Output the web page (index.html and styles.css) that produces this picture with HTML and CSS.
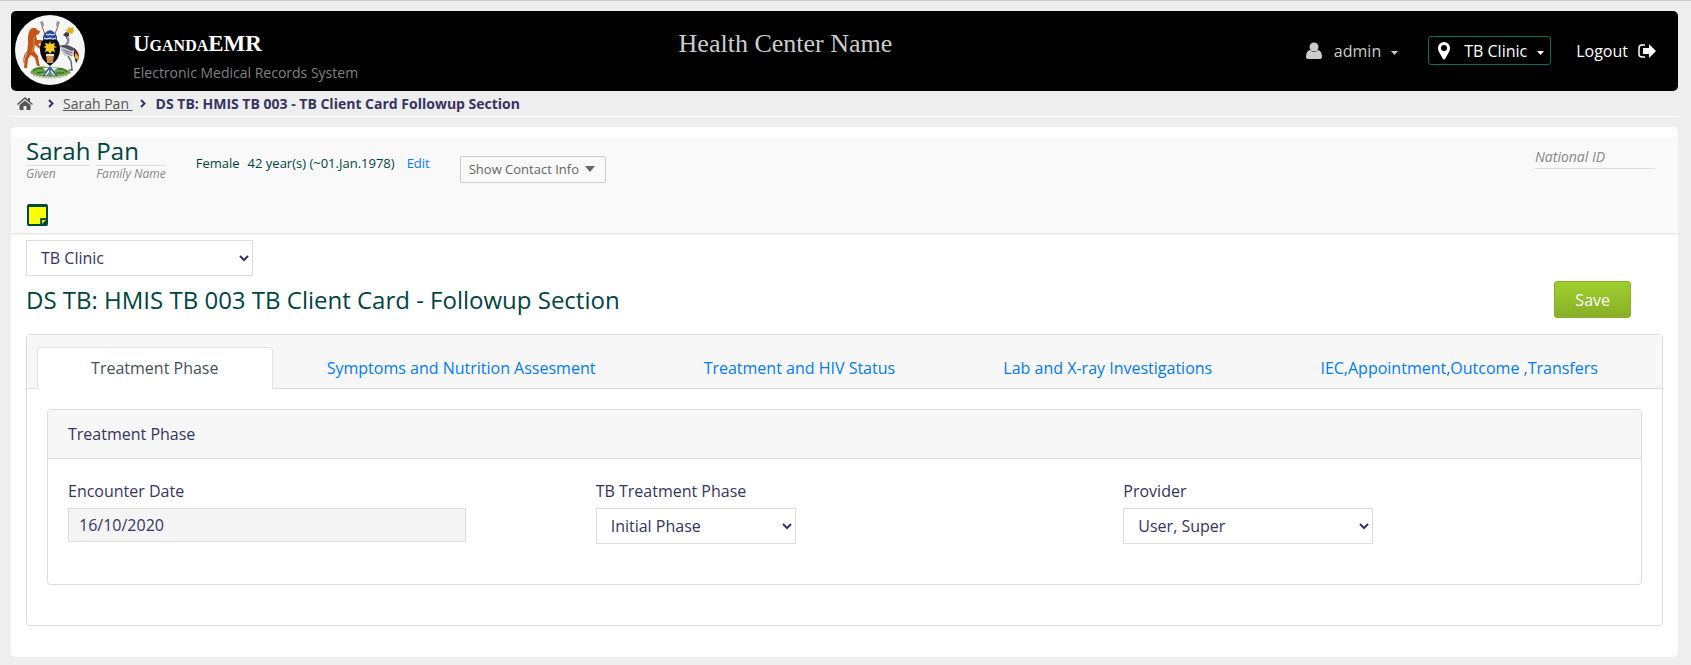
FILE: index.html
```html
<!DOCTYPE html>
<html lang="en">
<head>
<meta charset="utf-8">
<title>UgandaEMR</title>
<link rel="stylesheet" href="styles.css">
</head>
<body>
<header class="topbar">
  <a class="logo" href="#" aria-label="Home">
    <svg viewBox="0 0 70 70" width="70" height="70" aria-hidden="true">
      <circle cx="35" cy="35" r="35" fill="#f6f6f6"/>
      <path d="M15 58q2-5 8-6q5-2 12 1q8-2 14 1q6 1 7 4q-8 4-21 4t-20-4z" fill="#6fa544"/>
      <path d="M18 56q5-4 10-2M43 54q6-1 9 3M22 58l8-1M41 58l8 0" stroke="#3f6f2c" stroke-width="1.500" fill="none"/>
      <path d="M18 60q17 6 35 0" stroke="#b9b09a" stroke-width="1.500" stroke-dasharray="2 1" fill="none"/>
      <path d="M27 11l7 20M43 11l-8 20" stroke="#a8542d" stroke-width="1"/>
      <path d="M25 7l3-1l1 5l-2 1zM45 7l-3-1l-1 5l2 1z" fill="#8e9498"/>
      <path d="M15 15l2-2l4 0l1 2l3 1l-1 3l-3 1l1 5l5 0l0 3l-4 1l3 3l-1 2l-5-4l-1 6l4 5l1 7l1 3l-3 0l-2-8l-4-3l-3 4l-1 9l-3 0l1-10l2-5l1-9l0-8l1-4z" fill="#c4561c"/>
      <path d="M19 22l0 9l-2 6" stroke="#e98c4c" stroke-width="1" fill="none"/>
      <path d="M14 36q-6 2-5 12" stroke="#a54816" stroke-width="1" fill="none"/>
      <path d="M50 14l3 1l0-3l3 1l2-1l1 4l-2 3l-4-1z" fill="#dfb51c"/>
      <path d="M48 20l3-3l3 1l0 3l-3 1z" fill="#3b3b42"/>
      <path d="M51 21h2v3h-2z" fill="#cf2929"/>
      <path d="M52 22q3 4-1 8q-3 4 0 6" stroke="#8490a3" stroke-width="2.500" fill="none"/>
      <path d="M45 31q6-2 10 0l6 4l0 8l-5-3l-6 1l-4-5z" fill="#c3c7cd"/>
      <path d="M44 31q9-3 16 3l-3 2q-6-3-13-5z" fill="#4b525d"/>
      <path d="M50 37l7 4M48 35l9 3" stroke="#6c737d" stroke-width="1"/>
      <path d="M59 33q5 4 5 10l-3 5l-2-8z" fill="#2d1717"/>
      <path d="M59 34l5 7l-3 1z" fill="#b72623"/><path d="M60 38l4 4l-1 3l-3-2z" fill="#e8b82a"/>
      <path d="M53 41l3 5l1 9M54 55h4" stroke="#6a7077" stroke-width="1.500" fill="none"/>
      <path d="M28 25h14q3 3 3 10q0 9-10 16q-10-7-10-16q0-7 3-10z" fill="#080808"/>
      <path d="M35 26l1 3l4-1l-1 3l3 1l-3 1l1 4l-3-1l-2 3l-2-3l-3 1l1-4l-3-1l3-1l-1-3l4 1z" fill="#f3cc22"/>
      <path d="M31 39h8l-1 9h-6z" fill="#c98c4c"/><path d="M31 39h8v2h-8z" fill="#f0e4cb"/>
      <path d="M28 25l0-3q1-5 7-7q6 2 7 7l0 3z" fill="#274c9b"/>
      <path d="M31 19l2 1l2-1l2 1l3-1M29 23l3 1l3-1l3 1l3-1" stroke="#fff" stroke-width="1" fill="none"/>
      <path d="M28 53h14l-3 3l3 4h-3l-3-3v5h-2v-5l-3 3h-4l4-4z" fill="#fff"/>
      <path d="M35 52l-7 9M35 52l7 9M35 54v8" stroke="#2b5399" stroke-width="1.500"/>
    </svg>
  </a>
  <div class="brand">
    <h1 class="brand-name">UgandaEMR</h1>
    <div class="brand-sub">Electronic Medical Records System</div>
  </div>
  <div class="facility">Health Center Name</div>
  <nav class="user-nav" aria-label="User">
    <button class="nav-item user" type="button">
      <svg width="16" height="18" viewBox="0 0 16 18" fill="currentColor" aria-hidden="true"><circle cx="8" cy="5" r="4.500"/><path d="M4 8Q0 9 0 15q0 2 2 2h12q2 0 2-2 0-6-4-7-2 2-4 2T4 8z"/></svg>
      <span>admin</span>
      <svg class="small-caret" width="7" height="4" viewBox="0 0 7 4" fill="currentColor" aria-hidden="true"><path d="M0 0h7L3.500 4z"/></svg>
    </button>
    <button class="nav-item location" type="button">
      <svg width="12" height="18" viewBox="0 0 12 18" fill="currentColor" fill-rule="evenodd" aria-hidden="true"><path d="M6 0a6 6 0 0 1 6 6q0 2-1 4L7 17q-1 1-2 0L1 10Q0 8 0 6a6 6 0 0 1 6-6zm0 3a3 3 0 1 0 0 6 3 3 0 0 0 0-6z"/></svg>
      <span>TB Clinic</span>
      <svg class="small-caret" width="7" height="4" viewBox="0 0 7 4" fill="currentColor" aria-hidden="true"><path d="M0 0h7L3.500 4z"/></svg>
    </button>
    <a class="nav-item logout" href="#">
      <span>Logout</span>
      <svg width="18" height="14" viewBox="0 0 18 14" aria-hidden="true"><path d="M7 1H4Q1 1 1 4v6q0 3 3 3h3" fill="none" stroke="currentColor" stroke-width="1.500"/><path d="M5 4h6V0l7 7-7 7v-4H5z" fill="currentColor"/></svg>
    </a>
  </nav>
</header>

<nav class="breadcrumbs" aria-label="Breadcrumb">
  <a class="home" href="#" aria-label="Home"><svg width="16" height="13" viewBox="0 0 16 13" fill="currentColor" aria-hidden="true"><path d="M8 0l3 2.500V1h2v3.500L16 7l-1 1-7-6-7 6-1-1z"/><path d="M8 3.500l5.500 4.500v5h-4V9h-3v4h-4V8z"/></svg></a>
  <svg class="chevron" width="6" height="9" viewBox="0 0 6 9" aria-hidden="true"><path d="M1 1l3.500 3.500L1 8" fill="none" stroke="currentColor" stroke-width="2"/></svg>
  <a class="crumb" href="#">Sarah Pan&nbsp;</a>
  <svg class="chevron" width="6" height="9" viewBox="0 0 6 9" aria-hidden="true"><path d="M1 1l3.500 3.500L1 8" fill="none" stroke="currentColor" stroke-width="2"/></svg>
  <strong>DS TB: HMIS TB 003 - TB Client Card Followup Section</strong>
</nav>

<main class="content">
  <section class="patient">
    <div class="patient-row">
      <div class="names">
        <div class="name"><span class="name-value">Sarah</span><em class="name-label">Given</em></div>
        <div class="name"><span class="name-value">Pan</span><em class="name-label">Family Name</em></div>
      </div>
      <div class="demographics"><span>Female</span><span>42 year(s) (~01.Jan.1978)</span><a class="edit" href="#">Edit</a></div>
      <button class="contact" type="button">Show Contact Info
        <svg width="10" height="6" viewBox="0 0 10 6" fill="currentColor" aria-hidden="true"><path d="M0 0h10L5 6z"/></svg>
      </button>
      <div class="identifier"><em>National ID</em></div>
    </div>
    <button class="note" type="button" aria-label="Sticky note">
      <svg width="21" height="22" viewBox="0 0 21 22" aria-hidden="true"><rect width="21" height="22" rx="2" fill="#00463f"/><path d="M2 3h17v11h-6v6H2z" fill="#ff0"/><path d="M15 16h4l-4 4z" fill="#dce812"/><path d="M13.500 20v-5.500H19" fill="none" stroke="#366b25"/></svg>
    </button>
  </section>

  <section class="form">
    <select class="select clinic" aria-label="Clinic"><option>TB Clinic</option></select>
    <div class="title-row">
      <h2 class="title">DS TB: HMIS TB 003 TB Client Card - Followup Section</h2>
      <button class="save" type="button">Save</button>
    </div>
    <div class="card">
      <nav class="tabs" aria-label="Sections">
        <a class="tab active" href="#" aria-current="page">Treatment Phase</a>
        <a class="tab" href="#">Symptoms and Nutrition Assesment</a>
        <a class="tab" href="#">Treatment and HIV Status</a>
        <a class="tab" href="#">Lab and X-ray Investigations</a>
        <a class="tab" href="#">IEC,Appointment,Outcome ,Transfers</a>
      </nav>
      <div class="card-body">
        <section class="panel">
          <h3 class="panel-title">Treatment Phase</h3>
          <div class="fields">
            <div class="field">
              <label for="encounter">Encounter Date</label>
              <input class="date" id="encounter" type="text" value="16/10/2020" readonly>
            </div>
            <div class="field">
              <label for="phase">TB Treatment Phase</label>
              <select class="select phase" id="phase"><option>Initial Phase</option></select>
            </div>
            <div class="field">
              <label for="provider">Provider</label>
              <select class="select provider" id="provider"><option>User, Super</option></select>
            </div>
          </div>
        </section>
      </div>
    </div>
  </section>
</main>
</body>
</html>
```
FILE: styles.css
```css
* { box-sizing: border-box; }

body {
  margin: 0;
  padding: 10px 13px 9px 11px;
  border-top: 1px solid #ccc;
  background: #eee;
  color: #363463;
  font: 16px/24px "Open Sans", sans-serif;
}

button, input, select { font: inherit; color: inherit; }
h1, h2, h3 { margin: 0; font-weight: 400; }
a { color: #007bff; text-decoration: none; }
svg { display: block; flex: none; }

.topbar {
  display: grid;
  grid-template-columns: 118px calc(40% - 118px) 1fr auto;
  height: 80px;
  padding: 4px;
  border-radius: 5px;
  background: #000;
  color: #ccc;
}
.logo { width: 70px; }
.brand { padding-top: 13px; }
.brand-name {
  color: #fff;
  font: bold 23px/32px "Liberation Serif", serif;
  font-variant: small-caps;
}
.brand-sub { color: #808080; font-size: 14px; line-height: 26px; }
.facility { padding-top: 13px; font: 26px/32px "Liberation Serif", serif; }
.user-nav {
  display: flex;
  justify-content: flex-end;
  align-items: flex-start;
  padding: 21px 18px 0 0;
}
.nav-item {
  display: flex;
  align-items: center;
  height: 29px;
  padding: 0;
  border: 0;
  background: none;
  color: #fff;
}
.user { gap: 12px; margin-right: 30px; color: #ccc; }
.small-caret { margin-top: 4px; }
.user .small-caret { margin-left: -2px; }
.location {
  gap: 10px;
  margin-right: 25px;
  padding: 0 6px 0 9px;
  border: 1px solid #007060;
  border-radius: 3px;
}
.location span { padding-left: 4px; }
.logout { gap: 10px; }

.breadcrumbs {
  display: flex;
  align-items: center;
  height: 26px;
  padding-left: 6px;
  border-bottom: 1px solid #fff;
  font-size: 14px;
}
.home, .crumb { color: #555; }
.crumb { margin-right: 7px; text-decoration: underline; }
.home { margin-right: 15px; }
.home + .chevron { margin-right: 9px; }
.crumb + .chevron { margin-right: 10px; }

.content {
  margin-top: 10px;
  padding: 10px 0 31px;
  border-radius: 5px;
  background: #fff;
}
.patient {
  height: 98px;
  padding: 0 15px;
  border-bottom: 2px solid #eee;
  background: #f9f9f9;
  color: #00463f;
}
.patient-row { display: flex; align-items: flex-start; height: 67px; }
.names { display: flex; gap: 6px; }
.name-value {
  display: block;
  height: 29px;
  border-bottom: 1px solid #ddd;
  font-size: 24px;
  line-height: 28px;
}
.name-label { display: block; color: #888; font-size: 12px; line-height: 16px; }
.demographics {
  display: flex;
  gap: 8px;
  margin-left: 30px;
  padding-top: 14px;
  font-size: 13px;
}
.edit { margin-left: 4px; }
.contact {
  display: flex;
  align-items: center;
  gap: 6px;
  height: 27px;
  margin: 19px 0 0 30px;
  padding: 0 10px 1px 8px;
  border: 1px solid #ccc;
  border-radius: 2px;
  background: none;
  color: #666;
  font-size: 13px;
}
.identifier {
  width: 120px;
  margin: 9px 8px 0 auto;
  border-bottom: 1px solid #ddd;
  color: #888;
  font-size: 14px;
  line-height: 22px;
}
.note { display: block; margin-left: 1px; padding: 0; border: 0; background: none; }

.form { padding: 5px 15px 0; }
.select {
  display: block;
  height: 36px;
  padding: 5px 10px;
  border: 1px solid #ddd;
  border-radius: 0;
  background: #fff;
}
.clinic { width: 227px; }
.title-row {
  display: flex;
  justify-content: space-between;
  align-items: center;
  padding: 5px 32px 16px 0;
}
.title { color: #00463f; font-size: 24px; line-height: 36px; }
.save {
  height: 37px;
  padding: 0 20px;
  border: 1px solid #88af28;
  border-radius: 3px;
  background: linear-gradient(#9fd02e, #88af28);
  color: #fff;
}
.card { border: 1px solid #ddd; border-radius: 4px; }
.tabs {
  display: flex;
  padding: 12px 10px 0;
  border-bottom: 1px solid #ddd;
  background: #f7f7f7;
}
.tab {
  flex: 1 1 auto;
  margin-bottom: -1px;
  padding: 8px 16px;
  border: 1px solid transparent;
  border-radius: 4px 4px 0 0;
  text-align: center;
}
.active { border-color: #dee2e6 #dee2e6 #fff; background: #fff; color: #495057; }
.card-body { padding: 20px 20px 40px; }
.panel { border: 1px solid #ddd; border-radius: 4px; }
.panel-title {
  padding: 12px 20px;
  border-bottom: 1px solid #ddd;
  background: #f7f7f7;
  font-size: 16px;
  line-height: 24px;
}
.fields {
  display: grid;
  grid-template-columns: repeat(3, 1fr);
  gap: 30px;
  padding: 20px 20px 40px;
}
.field label { display: block; margin-bottom: 5px; }
.date {
  display: block;
  width: 80%;
  height: 34px;
  padding: 5px 10px;
  border: 1px solid #ddd;
  background: #f4f4f4;
}
.phase { width: 200px; }
.provider { width: 250px; }
```
